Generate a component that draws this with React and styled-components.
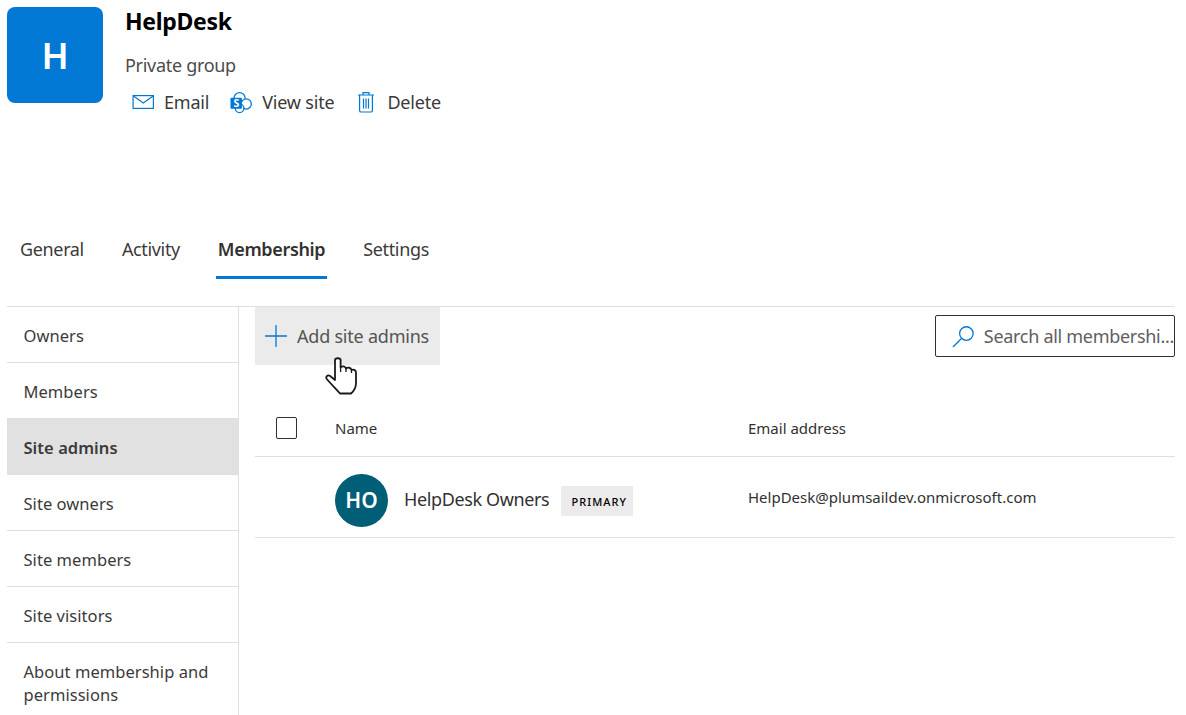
import React from 'react';
import styled, { createGlobalStyle } from 'styled-components';

const Global = createGlobalStyle`
  html, body { margin: 0; padding: 0; background: #fff; overflow: hidden; }
  body { font-family: "Noto Sans", "Open Sans", "Liberation Sans", sans-serif; color: #323130; }
  * { box-sizing: border-box; }
`;

const Page = styled.div`
  width: 1186px;
  height: 715px;
  padding: 7px 11px 0 7px;
  overflow: hidden;
`;
const Header = styled.header`
  display: flex;
  gap: 22px;
  height: 96px;
`;
const Logo = styled.div`
  width: 96px;
  height: 96px;
  border-radius: 8px;
  background: #0078d4;
  color: #fff;
  display: flex;
  align-items: center;
  justify-content: center;
  font-size: 36px;
  font-weight: 600;
`;
const Info = styled.div`
  display: flex;
  flex-direction: column;
  align-items: flex-start;
`;
const Title = styled.h1`
  margin: 0;
  font-size: 23px;
  line-height: 28px;
  font-weight: 700;
  letter-spacing: -0.3px;
  color: #000;
`;
const Subtitle = styled.div`
  margin-top: 18px;
  font-size: 18px;
  line-height: 24px;
  letter-spacing: -0.3px;
  color: #4d4b49;
`;
const Actions = styled.div`
  display: flex;
  margin-top: 13px;
  padding-left: 7px;
  gap: 21px;
`;
const Action = styled.div`
  display: flex;
  align-items: center;
  gap: 10px;
  font-size: 18px;
  line-height: 24px;
  letter-spacing: -0.2px;
  color: #3b3a39;
`;
const IconSlot = styled.span`
  display: flex;
  width: 22px;
  height: 24px;
  align-items: center;
  justify-content: center;
`;
const Tabs = styled.nav`
  display: flex;
  margin-top: 123px;
  padding-left: 11px;
  height: 53px;
  gap: 34px;
`;
const Tab = styled.div`
  padding: 11px 2px 0;
  height: 53px;
  font-size: 18px;
  line-height: 24px;
  letter-spacing: -0.35px;
  text-align: center;
  white-space: nowrap;
  font-weight: ${p => (p.$active ? 600 : 400)};
  color: ${p => (p.$active ? '#323130' : '#3b3a39')};
  border-bottom: 3px solid ${p => (p.$active ? '#0078d4' : 'transparent')};
`;
const Body = styled.div`
  margin-top: 27px;
  border-top: 1px solid #e1dfdd;
  display: flex;
  height: 420px;
`;
const Sidebar = styled.aside`
  width: 232px;
  border-right: 1px solid #e1dfdd;
  flex: none;
`;
const NavItem = styled.div`
  padding: 2px 16.5px 0;
  min-height: 56px;
  display: flex;
  align-items: center;
  font-size: 16.5px;
  line-height: 23px;
  letter-spacing: 0.05px;
  color: #3b3a39;
  font-weight: ${p => (p.$active ? 600 : 400)};
  background: ${p => (p.$active ? '#e1e1e1' : 'transparent')};
  border-bottom: 1px solid ${p => (p.$last ? 'transparent' : '#e1dfdd')};
  ${p => p.$last && 'padding-top: 17px; align-items: flex-start; min-height: 70px;'}
`;
const Main = styled.main`
  position: relative;
  flex: 1;
  padding-left: 16px;
`;
const Toolbar = styled.div`
  display: flex;
  justify-content: space-between;
  align-items: flex-start;
`;
const AddButton = styled.div`
  width: 185px;
  height: 58px;
  background: #ebebeb;
  display: flex;
  align-items: center;
  padding-left: 10px;
  gap: 10px;
  font-size: 18px;
  letter-spacing: -0.22px;
  color: #56544f;
`;
const Search = styled.div`
  width: 240px;
  height: 42px;
  margin-top: 8px;
  border: 1px solid #323130;
  border-radius: 2px;
  display: flex;
  align-items: center;
  padding-left: 16px;
  gap: 9px;
  font-size: 18px;
  letter-spacing: -0.3px;
  color: #605e5c;
  overflow: hidden;
  white-space: nowrap;
`;
const HeadRow = styled.div`
  display: grid;
  grid-template-columns: 80px 413px 1fr;
  align-items: center;
  height: 92px;
  padding-top: 35px;
  border-bottom: 1px solid #e1dfdd;
  font-size: 15px;
  color: #323130;
`;
const Checkbox = styled.div`
  width: 21px;
  height: 22px;
  margin-left: 21px;
  border: 1px solid #323130;
  border-radius: 2px;
`;
const Row = styled.div`
  display: grid;
  grid-template-columns: 80px 413px 1fr;
  align-items: center;
  height: 81px;
  border-bottom: 1px solid #e1dfdd;
`;
const Person = styled.div`
  display: flex;
  align-items: center;
  grid-column: 2;
  margin-top: 6px;
`;
const Avatar = styled.div`
  width: 53px;
  height: 53px;
  border-radius: 50%;
  background: #005e77;
  color: #fff;
  display: flex;
  align-items: center;
  justify-content: center;
  font-size: 21px;
  font-weight: 600;
  margin-right: 16px;
`;
const Name = styled.div`
  font-size: 18px;
  letter-spacing: -0.38px;
  color: #323130;
  margin-right: 12px;
  margin-top: -2px;
`;
const Badge = styled.div`
  width: 72px;
  height: 30px;
  margin-top: 2px;
  padding-left: 4px;
  background: #ebebeb;
  border-radius: 2px 0 0 2px;
  display: flex;
  align-items: center;
  justify-content: center;
  font-size: 11px;
  font-weight: 500;
  letter-spacing: 1.05px;
  color: #000;
`;
const Email = styled.div`
  font-size: 15px;
  color: #323130;
`;
const Cursor = styled.svg`
  position: absolute;
  left: 86px;
  top: 50px;
`;

const blue = '#0078d4';

const MailIcon = () => (
  <svg width="22" height="16" viewBox="0 0 22 16" fill="none" stroke={blue} strokeWidth="1.2">
    <rect x="1.1" y="1.6" width="20.3" height="12.8" />
    <path d="M1.500 2l9.800 7 9.800-7" />
  </svg>
);
const SiteIcon = () => (
  <svg width="23" height="23" viewBox="0 0 23 23" fill="none">
    <circle cx="10" cy="7" r="5.800" stroke={blue} strokeWidth="1.3" fill="#fff" />
    <circle cx="17" cy="13" r="5.300" stroke={blue} strokeWidth="1.3" fill="#fff" />
    <circle cx="10" cy="17.500" r="4.500" stroke={blue} strokeWidth="1.3" fill="#fff" />
    <rect x="0.5" y="6.5" width="12" height="11.500" rx="1" fill={blue} />
    <text x="6.500" y="16.200" textAnchor="middle" fontSize="11" fontWeight="700" fill="#fff" fontFamily="Noto Sans, sans-serif">S</text>
  </svg>
);
const TrashIcon = () => (
  <svg width="18" height="22" viewBox="0 0 18 22" fill="none" stroke={blue} strokeWidth="1.2">
    <path d="M1 4h16M6 4V1.600h6V4" />
    <path d="M2.600 4v15.400a1.600 1.600 0 0 0 1.600 1.600h9.600a1.600 1.600 0 0 0 1.600-1.600V4" />
    <path d="M6.500 7.500v10M9 7.500v10M11.500 7.500v10" />
  </svg>
);
const PlusIcon = () => (
  <svg width="22" height="22" viewBox="0 0 22 22" stroke={blue} strokeWidth="1.3">
    <path d="M0 11h22M11 0v22" />
  </svg>
);
const SearchIcon = () => (
  <svg width="23" height="23" viewBox="0 0 23 23" fill="none" stroke={blue} strokeWidth="1.3">
    <circle cx="14.500" cy="8.500" r="6.800" />
    <path d="M9.500 13.500L1 22" />
  </svg>
);
const HandCursor = () => (
  <Cursor width="33" height="39" viewBox="0 0 33 39">
    <path
      d="M10 3.200C10 .6 15.600 .6 15.600 3.200V10.500C17 8.800 20.500 9 21 11.500 22.500 10 26 10.500 26.500 13 28 12 31 12.800 31 15.500V26C31 30 29 34 26 36.500H15C11 32 6 27 1.800 22 .3 20 2.500 17.500 4.800 18.800L10 23Z"
      fill="#fff"
      stroke="#1a1a1a"
      strokeWidth="1.800"
      strokeLinejoin="round"
    />
    <path d="M15.600 10.500V15M21 11.500V15M26.500 13V16" stroke="#1a1a1a" strokeWidth="1.300" fill="none" />
  </Cursor>
);

const tabs = [
  { label: 'General' },
  { label: 'Activity' },
  { label: 'Membership', active: true },
  { label: 'Settings' },
];
const nav = ['Owners', 'Members', 'Site admins', 'Site owners', 'Site members', 'Site visitors'];

export default function App() {
  return (
    <Page>
      <Global />
      <Header>
        <Logo>H</Logo>
        <Info>
          <Title>HelpDesk</Title>
          <Subtitle>Private group</Subtitle>
          <Actions>
            <Action><IconSlot><MailIcon /></IconSlot>Email</Action>
            <Action><IconSlot><SiteIcon /></IconSlot>View site</Action>
            <Action><IconSlot><TrashIcon /></IconSlot>Delete</Action>
          </Actions>
        </Info>
      </Header>
      <Tabs>
        {tabs.map(t => (
          <Tab key={t.label} $active={t.active}>{t.label}</Tab>
        ))}
      </Tabs>
      <Body>
        <Sidebar>
          {nav.map(n => (
            <NavItem key={n} $active={n === 'Site admins'}>{n}</NavItem>
          ))}
          <NavItem $last>About membership and permissions</NavItem>
        </Sidebar>
        <Main>
          <Toolbar>
            <AddButton><PlusIcon />Add site admins</AddButton>
            <Search><SearchIcon />Search all membershi...</Search>
          </Toolbar>
          <HandCursor />
          <HeadRow>
            <Checkbox />
            <div>Name</div>
            <div>Email address</div>
          </HeadRow>
          <Row>
            <Person>
              <Avatar>HO</Avatar>
              <Name>HelpDesk Owners</Name>
              <Badge>PRIMARY</Badge>
            </Person>
            <Email>HelpDesk@plumsaildev.onmicrosoft.com</Email>
          </Row>
        </Main>
      </Body>
    </Page>
  );
}
